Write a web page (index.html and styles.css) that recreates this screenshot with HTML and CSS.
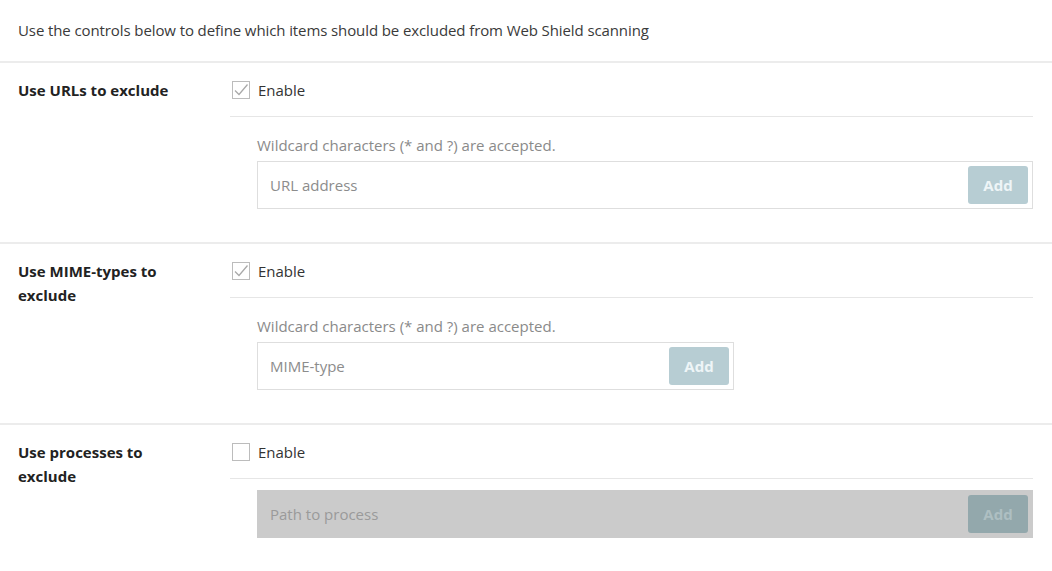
FILE: index.html
```html
<!DOCTYPE html>
<html>
<head>
<meta charset="utf-8">
<link rel="stylesheet" href="styles.css">
</head>
<body>
<div class="intro">Use the controls below to define which items should be excluded from Web Shield scanning</div>

<div class="section">
  <div class="label">Use URLs to exclude</div>
  <div class="body">
    <div class="enable-row">
      <span class="cb checked"><svg viewBox="0 0 18 18" width="18" height="18"><polyline points="3,9.5 7,13.5 15.5,3.5" fill="none" stroke="#a9a9a9" stroke-width="1.3"/></svg></span>
      <span class="enable">Enable</span>
    </div>
    <div class="inner">
      <div class="hint">Wildcard characters (* and ?) are accepted.</div>
      <div class="field wide">
        <span class="ph">URL address</span>
        <span class="btn">Add</span>
      </div>
    </div>
  </div>
</div>

<div class="section">
  <div class="label">Use MIME-types to exclude</div>
  <div class="body">
    <div class="enable-row">
      <span class="cb checked"><svg viewBox="0 0 18 18" width="18" height="18"><polyline points="3,9.5 7,13.5 15.5,3.5" fill="none" stroke="#a9a9a9" stroke-width="1.3"/></svg></span>
      <span class="enable">Enable</span>
    </div>
    <div class="inner">
      <div class="hint">Wildcard characters (* and ?) are accepted.</div>
      <div class="field narrow">
        <span class="ph">MIME-type</span>
        <span class="btn">Add</span>
      </div>
    </div>
  </div>
</div>

<div class="section last">
  <div class="label">Use processes to exclude</div>
  <div class="body">
    <div class="enable-row">
      <span class="cb"></span>
      <span class="enable">Enable</span>
    </div>
    <div class="inner compact">
      <div class="field wide disabled">
        <span class="ph">Path to process</span>
        <span class="btn">Add</span>
      </div>
    </div>
  </div>
</div>
</body>
</html>
```

FILE: styles.css
```css
* { box-sizing: border-box; }
html, body {
  margin: 0;
  padding: 0;
  background: #fff;
  font-family: "Open Sans", "Liberation Sans", sans-serif;
  font-size: 15px;
  color: #333;
}
.intro {
  height: 63px;
  padding: 20px 18px 0;
  line-height: 20px;
  color: #3a3a3a;
  letter-spacing: -0.1px;
  border-bottom: 2px solid #ececec;
}
.section {
  display: flex;
  height: 181px;
  padding: 0 19px 0 18px;
  border-bottom: 2px solid #ececec;
}
.section.last {
  height: auto;
  border-bottom: none;
}
.label {
  width: 160px;
  margin-right: 52px;
  font-weight: 700;
  color: #222;
  line-height: 24px;
  padding-top: 15px;
}
.body {
  flex: 1;
}
.enable-row {
  display: flex;
  align-items: center;
  padding: 18px 0 17px 2px;
  border-bottom: 1px solid #e6e6e6;
}
.cb {
  width: 18px;
  height: 18px;
  border: 1px solid #bcbcbc;
  display: inline-block;
  position: relative;
  background: #fff;
}
.cb svg {
  position: absolute;
  left: -1px;
  top: -1px;
}
.enable {
  margin-left: 8px;
  line-height: 18px;
  color: #333;
}
.inner {
  padding: 18px 0 0 27px;
}
.inner.compact {
  padding-top: 11px;
}
.hint {
  color: #8a8a8a;
  line-height: 20px;
  margin-bottom: 6px;
}
.field {
  height: 48px;
  border: 1px solid #dedede;
  display: flex;
  align-items: center;
  justify-content: space-between;
  padding: 0 4px 0 12px;
  background: #fff;
}
.field.narrow {
  width: 477px;
}
.ph {
  color: #8c8c8c;
}
.btn {
  width: 60px;
  height: 38px;
  border-radius: 3px;
  background: #b7cdd3;
  color: #eef5f7;
  font-weight: 700;
  display: flex;
  align-items: center;
  justify-content: center;
}
.field.disabled {
  background: #cbcbcb;
  border-color: #cbcbcb;
}
.field.disabled .ph {
  color: #9a9a9a;
}
.field.disabled .btn {
  background: #93a8ac;
  color: #aebfc2;
}
```
